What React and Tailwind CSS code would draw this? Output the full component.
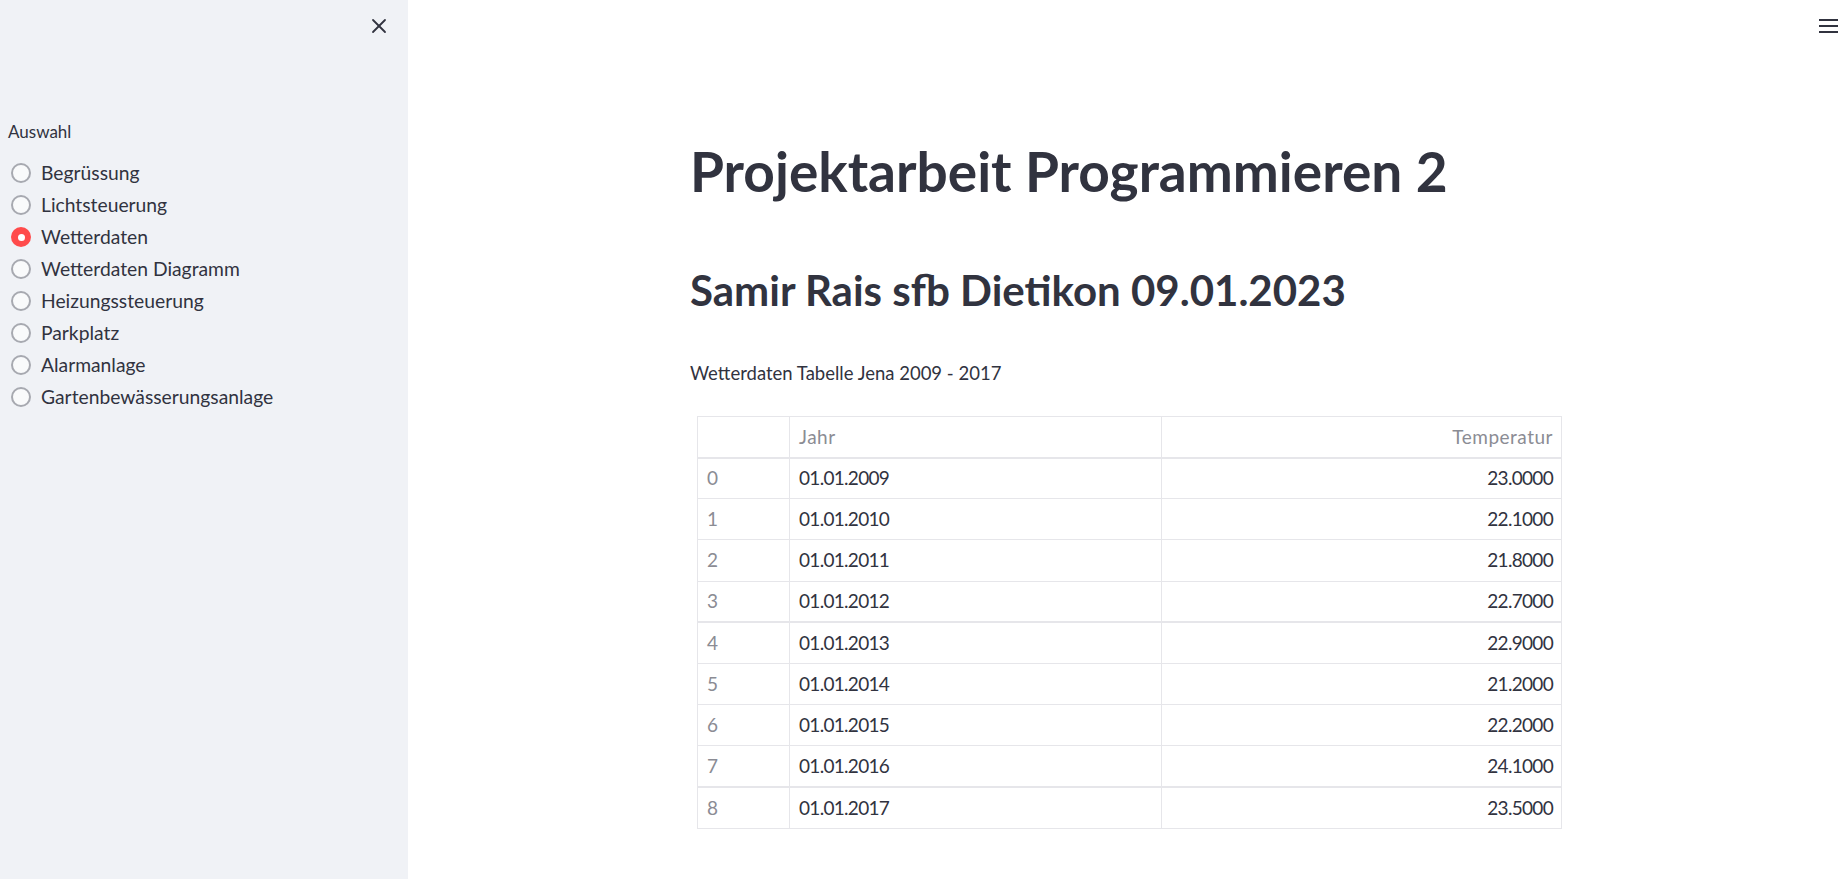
import { X } from "lucide-react";

const options = [
  "Begrüssung",
  "Lichtsteuerung",
  "Wetterdaten",
  "Wetterdaten Diagramm",
  "Heizungssteuerung",
  "Parkplatz",
  "Alarmanlage",
  "Gartenbewässerungsanlage",
];

const rows = [
  ["01.01.2009", "23.0000"],
  ["01.01.2010", "22.1000"],
  ["01.01.2011", "21.8000"],
  ["01.01.2012", "22.7000"],
  ["01.01.2013", "22.9000"],
  ["01.01.2014", "21.2000"],
  ["01.01.2015", "22.2000"],
  ["01.01.2016", "24.1000"],
  ["01.01.2017", "23.5000"],
];

function Radio({ checked }) {
  if (checked) {
    return (
      <span className="w-[20px] h-[20px] rounded-full bg-[#ff4b4b] flex items-center justify-center shrink-0">
        <span className="w-[7px] h-[7px] rounded-full bg-white" />
      </span>
    );
  }
  return <span className="w-[20px] h-[20px] rounded-full border-2 border-[#a7a9b0] bg-[#f9fafb] shrink-0" />;
}

export default function App() {
  const selected = "Wetterdaten";

  return (
    <div className="flex w-full h-[879px] text-[#31333f] font-['Lato',sans-serif] bg-white">
      <aside className="w-[408px] shrink-0 bg-[#f0f2f6] flex flex-col">
        <div className="flex justify-end pt-[14px] pr-[17px]">
          <X size={24} strokeWidth={1.8} className="text-[#31333f]" />
        </div>
        <div className="pl-[8px] mt-[84px] text-[17px] leading-[20px]">Auswahl</div>
        <div className="mt-[15px] flex flex-col">
          {options.map((o) => (
            <div key={o} className="h-[32px] flex items-center pl-[11px] gap-[10px]">
              <Radio checked={o === selected} />
              <span className="text-[19.3px]">{o}</span>
            </div>
          ))}
        </div>
      </aside>

      <main className="flex-1 flex flex-col">
        <div className="flex justify-end pt-[19px] pr-[4px]">
          <div className="w-[19px] flex flex-col gap-[4px]">
            <span className="h-[2px] bg-[#31333f]" />
            <span className="h-[2px] bg-[#31333f]" />
            <span className="h-[2px] bg-[#31333f]" />
          </div>
        </div>

        <div className="ml-[282px] w-[876px] flex flex-col">
          <h1 className="mt-[106px] text-[55px] leading-[64px] font-bold">
            Projektarbeit Programmieren 2
          </h1>
          <h2 className="mt-[62px] text-[42px] leading-[50px] font-bold">
            Samir Rais sfb Dietikon 09.01.2023
          </h2>
          <p className="mt-[47px] text-[18.5px] leading-[23px]">Wetterdaten Tabelle Jena 2009 - 2017</p>

          <table className="mt-[31px] ml-[7px] w-[864px] border-collapse table-fixed text-[19px]">
            <colgroup>
              <col className="w-[92px]" />
              <col className="w-[372px]" />
              <col className="w-[400px]" />
            </colgroup>
            <thead>
              <tr className="h-[41px] border-b-2 border-[#e6e6ea]">
                <th className="border border-[#e6e6ea]" />
                <th className="border border-[#e6e6ea] text-left font-normal px-[9px] text-[#8b8c94] tracking-[0.5px]">
                  Jahr
                </th>
                <th className="border border-[#e6e6ea] text-right font-normal px-[8px] text-[#8b8c94] tracking-[0.5px]">
                  Temperatur
                </th>
              </tr>
            </thead>
            <tbody className="tracking-[-0.7px]">
              {rows.map((r, i) => (
                <tr
                  key={i}
                  className={`h-[41.2px] ${i === 3 || i === 7 ? "border-b-2" : "border-b"} border-[#e6e6ea]`}
                >
                  <td className="border-x border-[#e6e6ea] px-[9px] text-[#8b8c94]">{i}</td>
                  <td className="border-x border-[#e6e6ea] px-[9px]">{r[0]}</td>
                  <td className="border-x border-[#e6e6ea] px-[8px] text-right">{r[1]}</td>
                </tr>
              ))}
            </tbody>
          </table>
        </div>
      </main>
    </div>
  );
}
